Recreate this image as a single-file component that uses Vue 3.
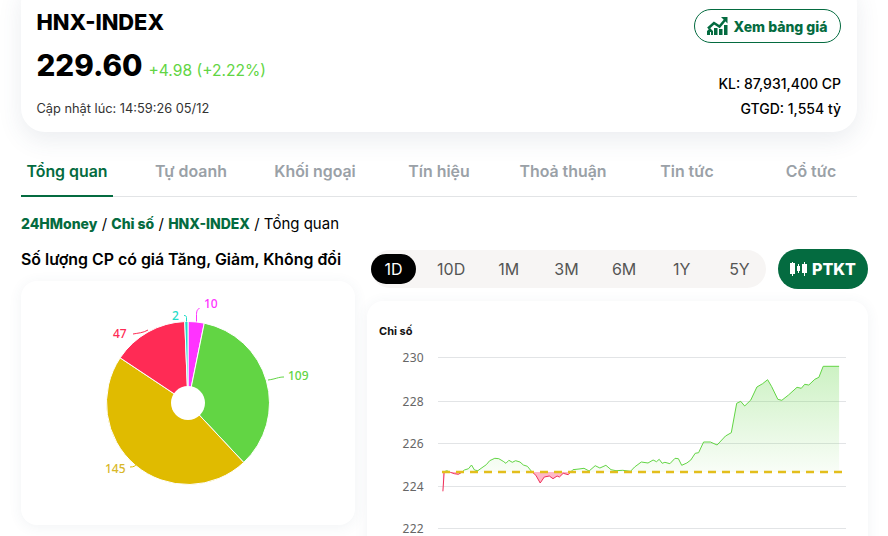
<template>
  <div class="page">
    <header class="summary">
      <div class="summary-left">
        <h1 class="symbol">HNX-INDEX</h1>
        <div class="price-row">
          <span class="price">229.60</span>
          <span class="change">+4.98 (+2.22%)</span>
        </div>
        <p class="updated">Cập nhật lúc: 14:59:26 05/12</p>
      </div>
      <div class="summary-right">
        <a class="board-btn">
          <svg width="21" height="18" viewBox="0 0 21 18" fill="#046b40">
            <path d="M0 14l3-3 3 3v4H4v-3H3v3H0z" />
            <rect x="7" y="11" width="3.500" height="7" />
            <rect x="12" y="12" width="3.500" height="6" />
            <rect x="17" y="8" width="3.500" height="10" />
            <path d="M1 11.500 7 6l5.500 3.500L18 3" fill="none" stroke="#046b40" stroke-width="2.500" />
            <path d="M14 0h6.500v6.500z" />
          </svg>
          Xem bảng giá
        </a>
        <div class="stats">
          <div>KL: 87,931,400 CP</div>
          <div>GTGD: 1,554 tỷ</div>
        </div>
      </div>
    </header>

    <nav class="tabs">
      <a v-for="(tab, i) in tabs" :key="tab" class="tab" :class="{ active: i === 0 }">{{ tab }}</a>
    </nav>

    <div class="crumbs">
      <a>24HMoney</a> / <a>Chỉ số</a> / <a>HNX-INDEX</a> / Tổng quan
    </div>

    <div class="columns">
      <section class="left">
        <h2 class="title">Số lượng CP có giá Tăng, Giảm, Không đổi</h2>
        <div class="card pie-card">
          <svg width="334" height="244" viewBox="21 281 334 244">
            <path
              v-for="s in slices"
              :key="s.value"
              :d="s.d"
              :fill="s.color"
              stroke="#fff"
              stroke-width="1"
            />
            <circle cx="188" cy="403" r="17" fill="#fff" />
            <g fill="none" stroke-width="1">
              <path d="M196.500 321.500v-7c0-4 1.500-6 3-6" stroke="#ff33ff" />
              <path d="M186.500 321.500v-4c0-1.500-1-2-2.500-2" stroke="#1fdcc8" />
              <path d="M133 334c5-1 10-1 15-4" stroke="#ff2b55" />
              <path d="M268 380c8-1 10-3 16-3" stroke="#62d544" />
              <path d="M137 464c-2 2-3 3-7 3" stroke="#e0bb00" />
            </g>
            <g class="pie-label">
              <text x="204" y="308" fill="#ff33ff">10</text>
              <text x="172" y="320" fill="#1fdcc8">2</text>
              <text x="113" y="338" fill="#ff2b55">47</text>
              <text x="288" y="380" fill="#62d544">109</text>
              <text x="105" y="473" fill="#d9b82a">145</text>
            </g>
          </svg>
        </div>
      </section>

      <section class="right">
        <div class="controls">
          <div class="ranges">
            <a v-for="(r, i) in ranges" :key="r" class="range" :class="{ active: i === 0 }">{{ r }}</a>
          </div>
          <a class="ptkt">
            <svg width="17" height="14" viewBox="0 0 17 14" fill="#fff">
              <rect x="0" y="1" width="5" height="11" />
              <rect x="2" y="0" width="1" height="14" />
              <rect x="7" y="4" width="3" height="5" />
              <rect x="8" y="2" width="1" height="9" />
              <rect x="12" y="2" width="5" height="9" />
              <rect x="14" y="0" width="1" height="14" />
            </svg>
            PTKT
          </a>
        </div>
        <div class="card chart-card">
          <svg width="501" height="235" viewBox="367 301 501 235">
            <defs>
              <linearGradient id="up" gradientUnits="userSpaceOnUse" x1="0" y1="366" x2="0" y2="472">
                <stop offset="0" stop-color="#62d544" stop-opacity="0.32" />
                <stop offset="1" stop-color="#62d544" stop-opacity="0.04" />
              </linearGradient>
              <clipPath id="above"><rect x="430" y="340" width="420" height="132" /></clipPath>
              <clipPath id="below"><rect x="430" y="472" width="420" height="60" /></clipPath>
            </defs>
            <text x="379" y="335" class="axis-title">Chỉ số</text>
            <g v-for="t in ticks" :key="t.label">
              <line x1="438" x2="846" :y1="t.y" :y2="t.y" stroke="#e2e4e6" />
              <text x="424" :y="t.y + 4" class="tick">{{ t.label }}</text>
            </g>
            <path :d="areaPath" fill="url(#up)" clip-path="url(#above)" />
            <path :d="areaPath" fill="#ffb8c8" clip-path="url(#below)" />
            <path :d="linePath" fill="none" stroke="#62d544" clip-path="url(#above)" />
            <path :d="linePath" fill="none" stroke="#f0305a" clip-path="url(#below)" />
            <line x1="442" x2="843" y1="472" y2="472" stroke="#e3be1c" stroke-width="2.500" stroke-dasharray="8 6" />
          </svg>
        </div>
      </section>
    </div>
  </div>
</template>

<script setup>
const tabs = ['Tổng quan', 'Tự doanh', 'Khối ngoại', 'Tín hiệu', 'Thoả thuận', 'Tin tức', 'Cổ tức'];
const ranges = ['1D', '10D', '1M', '3M', '6M', '1Y', '5Y'];

// pie, clockwise from the top
const pieData = [
  { value: 10, color: '#ff33ff' },
  { value: 109, color: '#62d544' },
  { value: 145, color: '#e0bb00' },
  { value: 47, color: '#ff2b55' },
  { value: 2, color: '#1fdcc8' },
];
const total = pieData.reduce((sum, p) => sum + p.value, 0);
const point = (angle) => {
  const a = (angle - 90) * (Math.PI / 180);
  return `${(188 + 81.5 * Math.cos(a)).toFixed(2)} ${(403 + 81.5 * Math.sin(a)).toFixed(2)}`;
};
let angle = 0;
const slices = pieData.map((p) => {
  const sweep = (p.value / total) * 360;
  const d = `M188 403L${point(angle)}A81.500 81.500 0 ${sweep > 180 ? 1 : 0} 1 ${point(angle + sweep)}Z`;
  angle += sweep;
  return { ...p, d };
});

const ticks = [
  { label: 230, y: 357.5 },
  { label: 228, y: 401.5 },
  { label: 226, y: 443.5 },
  { label: 224, y: 486.5 },
  { label: 222, y: 528.5 },
];

// traced line, in crop coordinates of the chart region
const raw = [
  246, 754, 250, 695, 258, 692, 268, 697, 280, 701, 292, 703, 300, 698, 310, 690, 322, 686, 331, 675,
  340, 690, 350, 692, 362, 683, 375, 674, 385, 662, 400, 655, 412, 656, 425, 664, 433, 670, 442, 661,
  452, 667, 462, 662, 475, 666, 485, 675, 497, 679, 510, 695, 522, 706, 535, 729, 547, 711, 562, 708,
  573, 716, 585, 708, 592, 711, 603, 700, 618, 704, 632, 689, 650, 687, 665, 685, 680, 693, 698, 677,
  712, 684, 730, 676, 745, 689, 760, 692, 780, 691, 803, 694, 815, 681, 835, 666, 855, 669, 870, 660,
  880, 665, 888, 658, 897, 670, 905, 667, 920, 671, 935, 655, 945, 656, 955, 676, 970, 669, 982, 660,
  995, 640, 1005, 638, 1020, 606, 1040, 606, 1060, 615, 1085, 588, 1102, 578, 1118, 490, 1130, 484, 1142, 498,
  1160, 480, 1178, 441, 1195, 431, 1210, 419, 1222, 440, 1240, 478, 1252, 481, 1272, 465, 1297, 442, 1310, 445,
  1320, 433, 1332, 435, 1350, 418, 1362, 412, 1375, 379, 1422, 379,
];
const toX = (v) => (360 + v * 0.3369).toFixed(1);
const pts = [];
for (let i = 0; i < raw.length; i += 2) {
  pts.push(`${toX(raw[i])} ${(240 + raw[i + 1] / 3).toFixed(1)}`);
}
const linePath = 'M' + pts.join('L');
const areaPath = `${linePath}L${toX(1422)} 472L${toX(246)} 472Z`;
</script>

<style>
html,
body {
  margin: 0;
  background: #fff;
  overflow: hidden;
}
</style>

<style scoped>
.page {
  width: 888px;
  height: 536px;
  overflow: hidden;
  box-sizing: border-box;
  padding: 0 20px 0 21px;
  font-family: Inter, "Noto Sans", sans-serif;
  color: #000;
}

.summary {
  display: flex;
  justify-content: space-between;
  box-sizing: border-box;
  width: 836px;
  height: 152px;
  margin-top: -20px;
  padding: 28px 16px 0 15.500px;
  background: #fff;
  border-radius: 24px;
  box-shadow: 0 8px 24px rgba(60, 80, 110, 0.1);
}

.symbol {
  margin: 0;
  font-size: 21.800px;
  line-height: 28px;
  font-weight: 800;
}

.price-row {
  display: flex;
  align-items: baseline;
  gap: 6px;
  margin-top: 9px;
}

.price {
  font-size: 29.600px;
  line-height: 40px;
  font-weight: 800;
}

.change {
  font-size: 15.600px;
  color: #62d544;
}

.updated {
  margin: 15px 0 0;
  font-size: 12.800px;
  line-height: 18px;
  color: #333;
}

.summary-right {
  display: flex;
  flex-direction: column;
  align-items: flex-end;
  padding-top: 1px;
}

.board-btn {
  display: flex;
  align-items: center;
  gap: 5px;
  box-sizing: border-box;
  width: 147px;
  height: 34px;
  justify-content: center;
  border: 1px solid #046b40;
  border-radius: 17px;
  font-size: 14px;
  font-weight: 800;
  color: #046b40;
}

.stats {
  margin-top: 29px;
  text-align: right;
  font-size: 14px;
  line-height: 24.500px;
  font-weight: 500;
}

.tabs {
  display: flex;
  gap: 32px;
  width: 836px;
  height: 44px;
  margin-top: 20px;
  border-bottom: 1px solid #e2e4e6;
}

.tab {
  flex: 1;
  text-align: center;
  font-size: 15.900px;
  line-height: 40px;
  font-weight: 600;
  color: #9aa1a7;
  white-space: nowrap;
}

.tab.active {
  color: #046b40;
  border-bottom: 2px solid #046b40;
  height: 43px;
}

.crumbs {
  margin-top: 17px;
  font-size: 15px;
  line-height: 20px;
  white-space: nowrap;
}

.crumbs a {
  color: #046b40;
  font-size: 14px;
  font-weight: 800;
}

.columns {
  display: flex;
  gap: 12px;
  margin-top: 8px;
}

.left {
  width: 334px;
  flex: none;
}

.title {
  margin: 6px 0 0;
  font-size: 15.900px;
  line-height: 24px;
  font-weight: 600;
  white-space: nowrap;
}

.card {
  background: #fff;
  border-radius: 16px;
  box-shadow: 0 2px 14px rgba(60, 80, 110, 0.07);
}

.pie-card {
  height: 244px;
  margin-top: 9px;
}

.pie-card svg,
.chart-card svg {
  display: block;
}

.pie-label text {
  font-family: "Noto Sans", sans-serif;
  font-size: 12px;
  font-weight: 500;
}

.right {
  width: 501px;
  flex: none;
}

.controls {
  display: flex;
  align-items: center;
  justify-content: space-between;
  margin-left: 4px;
  height: 40px;
  margin-top: 7px;
}

.ranges {
  display: flex;
  align-items: center;
  justify-content: space-between;
  box-sizing: border-box;
  width: 395px;
  height: 38px;
  padding-right: 4px;
  background: #f7f5f4;
  border-radius: 19px;
}

.range {
  width: 45px;
  height: 30px;
  line-height: 30px;
  text-align: center;
  border-radius: 15px;
  font-size: 16px;
  color: #555;
}

.range.active {
  background: #000;
  color: #fff;
}

.ptkt {
  display: flex;
  align-items: center;
  justify-content: center;
  gap: 5px;
  width: 90px;
  height: 40px;
  background: #046b40;
  border-radius: 20px;
  color: #fff;
  font-size: 16px;
  font-weight: 800;
}

.chart-card {
  margin-top: 12px;
  height: 260px;
}

.axis-title {
  font-size: 11px;
  font-weight: 700;
  fill: #111;
}

.tick {
  font-family: "Noto Sans", sans-serif;
  font-size: 12px;
  fill: #666;
  text-anchor: end;
  letter-spacing: 0.3px;
}
</style>
